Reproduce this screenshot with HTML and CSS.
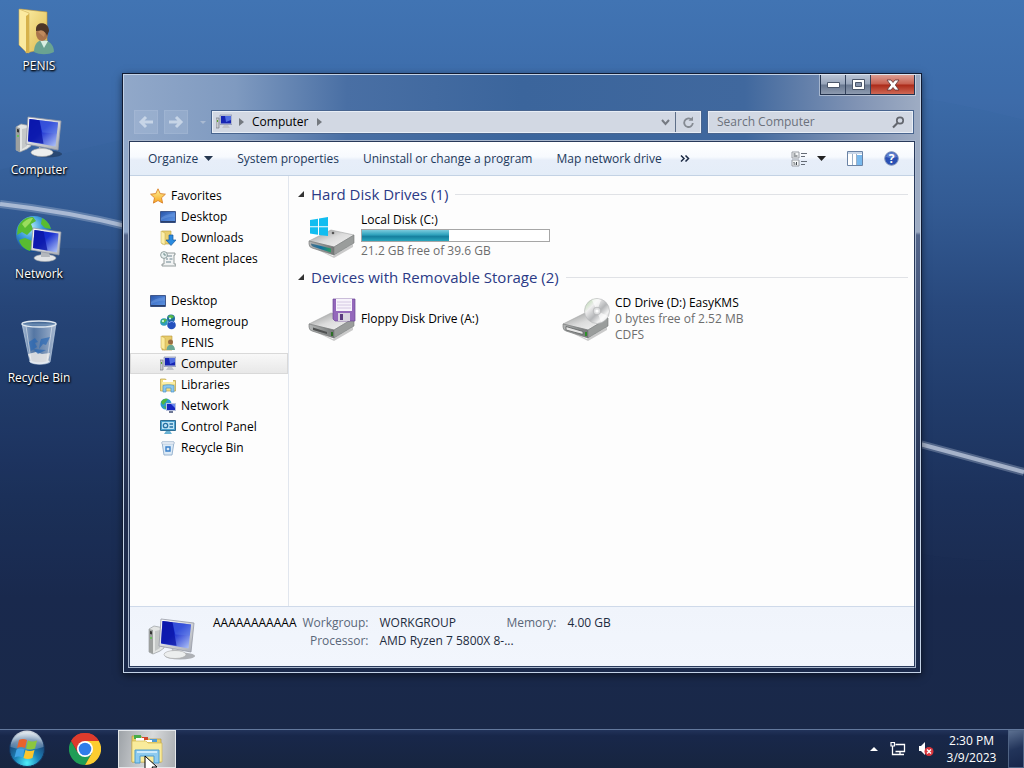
FILE: index.html
```html
<!DOCTYPE html>
<html lang="en">
<head>
    <meta charset="UTF-8">
    <meta name="viewport" content="width=device-width, initial-scale=1.0">
    <title>Computer</title>
    <link rel="stylesheet" href="styles.css">
</head>
<body>
    <!-- Shared icons -->
    <svg class="sprite" aria-hidden="true">
        <defs>
            <linearGradient id="gScreen" x1="0" y1="0" x2="1" y2="1"><stop offset="0" stop-color="#0a1cc0"/><stop offset=".45" stop-color="#1a30d0"/><stop offset="1" stop-color="#b9cdfa"/></linearGradient>
            <linearGradient id="gFrame" x1="0" y1="0" x2="1" y2="1"><stop offset="0" stop-color="#fff"/><stop offset="1" stop-color="#a9adb5"/></linearGradient>
            <linearGradient id="gFolder" x1="0" y1="0" x2="1" y2="1"><stop offset="0" stop-color="#fdf0a9"/><stop offset="1" stop-color="#dcb94e"/></linearGradient>
            <linearGradient id="gTop" x1="0" y1="0" x2="1" y2="1"><stop offset="0" stop-color="#8f9191"/><stop offset=".5" stop-color="#dcdcdc"/><stop offset="1" stop-color="#f6f6f6"/></linearGradient>
            <linearGradient id="gFront" x1="0" y1="0" x2="1" y2="0"><stop offset="0" stop-color="#b5b7b7"/><stop offset="1" stop-color="#737676"/></linearGradient>
            <linearGradient id="gTeal" x1="0" y1="0" x2="1" y2="0"><stop offset="0" stop-color="#4d7188"/><stop offset=".5" stop-color="#1370a0"/><stop offset="1" stop-color="#2d9b63"/></linearGradient>
            <radialGradient id="gGlobe" cx=".4" cy=".3" r=".75"><stop offset="0" stop-color="#b5ecfb"/><stop offset=".45" stop-color="#3b9bda"/><stop offset="1" stop-color="#0d3f87"/></radialGradient>
            <linearGradient id="gBin" x1="0" y1="0" x2="1" y2="0"><stop offset="0" stop-color="#dcecfa" stop-opacity=".7"/><stop offset=".35" stop-color="#86abd3" stop-opacity=".5"/><stop offset="1" stop-color="#dfeaf7" stop-opacity=".7"/></linearGradient>
            <linearGradient id="gDesk" x1="0" y1="0" x2="1" y2="1"><stop offset="0" stop-color="#2853a5"/><stop offset=".5" stop-color="#477bd0"/><stop offset="1" stop-color="#5f96e2"/></linearGradient>
            <linearGradient id="gDisc" x1="0" y1="0" x2="1" y2="1"><stop offset="0" stop-color="#a9d39a"/><stop offset=".3" stop-color="#eee"/><stop offset=".55" stop-color="#b4b6b8"/><stop offset=".75" stop-color="#f4f4f4"/><stop offset="1" stop-color="#9c9fa2"/></linearGradient>
            <radialGradient id="gOrb" cx=".5" cy=".9" r=".85"><stop offset="0" stop-color="#4ff0fb"/><stop offset=".4" stop-color="#1c84b9"/><stop offset=".8" stop-color="#1b4678"/><stop offset="1" stop-color="#7795b0"/></radialGradient>
            <linearGradient id="gOrbShine" x1="0" y1="0" x2="0" y2="1"><stop offset="0" stop-color="#fff" stop-opacity=".85"/><stop offset="1" stop-color="#cfe2f1" stop-opacity=".2"/></linearGradient>
            <linearGradient id="gStar" x1="0" y1="0" x2="0" y2="1"><stop offset="0" stop-color="#fff6a0"/><stop offset="1" stop-color="#f6a51c"/></linearGradient>
        </defs>

        <symbol id="computer" viewBox="0 0 48 48">
            <ellipse cx="32" cy="42" rx="15" ry="3.500" fill="#000" opacity=".28"/>
            <path d="M1 15l5-3 10 2v20l-4 3-7 3-4-2z" fill="#e3e5e4" stroke="#999da0" stroke-width=".7"/>
            <path d="M1 15l4 1v24l-4-2z" fill="#9da09f"/>
            <path d="M2 17l2 .5v3l-2-.5z" fill="#333"/><circle cx="3" cy="24" r="1" fill="#5bc748"/>
            <path d="M7 17l5-1v18l-5 3z" fill="#c5c8c8"/>
            <path d="M24 35l9 2 1 4H23z" fill="#b5b8bc"/>
            <ellipse cx="27" cy="40.500" rx="11" ry="4" fill="#eceeee" stroke="#aaa" stroke-width=".6"/>
            <path d="M13 5l33 4-3 29-32-6z" fill="url(#gFrame)" stroke="#9599a5" stroke-width=".8"/>
            <path d="M14.500 7l28.500 3.500-2.500 24-27.500-5z" fill="url(#gScreen)"/>
            <path d="M14.500 7l10 1.200 4 23.600-15.500-2.800z" fill="#0914a4" opacity=".75"/>
            <path d="M24.500 8.200L43 10.500l-1.200 11-14.500-1z" fill="#5c7de8" opacity=".45"/>
        </symbol>

        <symbol id="computer-sm" viewBox="0 0 16 16">
            <path d="M0 4h3v10H0z" fill="#c8cad0" stroke="#777c85" stroke-width=".7"/><path d="M1 6h1v2H1z" fill="#58a72f"/>
            <path d="M4 1h12v9.500H4z" fill="#c5ccdd" stroke="#7a84a5" stroke-width=".6"/>
            <path d="M5 2h10v7.500H5z" fill="#1625b4"/><path d="M9 2h6v4l-5 2z" fill="#4f6de2"/>
            <path d="M8 11h4l2 3H6z" fill="#c0c3ca"/>
        </symbol>

        <symbol id="user-folder" viewBox="0 0 48 48">
            <path d="M5 1l27 3v36l-21 5z" fill="url(#gFolder)" stroke="#c49a3a" stroke-width=".6"/>
            <path d="M4 1l10 4v40l-3-1-7-7z" fill="#fbeaa0" stroke="#cfaf55" stroke-width=".6"/>
            <path d="M11 8l3-2v39l-3-1z" fill="#d6b24c"/>
            <path d="M19 44c0-8 4-12 9-12s11 4 11 12c-6 3-14 3-20 0z" fill="#6aa391"/>
            <path d="M25 32l4 8 4-7z" fill="#d9efe2"/>
            <ellipse cx="27" cy="25" rx="6" ry="8" fill="#a9744c"/>
            <path d="M21 21c0-8 13-8 13 2l-2 5c-1-5-5-6-11-5z" fill="#4c3527"/>
            <path d="M23 24c2-3 6-2 7 1l-1 4z" fill="#c99467" opacity=".7"/>
        </symbol>

        <symbol id="user-folder-sm" viewBox="0 0 16 16">
            <path d="M2 1h10v14H2z" fill="#e7cc6c" stroke="#b99637" stroke-width=".6"/><path d="M1 1l4 2v12l-4-2z" fill="#fbeb9d" stroke="#c3a344" stroke-width=".5"/>
            <circle cx="10.500" cy="7" r="2.500" fill="#9a6c43"/><path d="M6.500 15c0-7 8.500-7 8.500 0z" fill="#69a794"/>
        </symbol>

        <symbol id="network" viewBox="0 0 48 48">
            <circle cx="19" cy="18" r="18" fill="url(#gGlobe)"/>
            <path d="M3 11C6 4 11 1 18 1l3 4-5 3 2 5-6 6-5-3-5 3zM10 22l7 3 2 5-4 5C9 33 5 29 4 24zM27 2c4 2 8 6 9 11l-6-1-4-4z" fill="#58bb31"/>
            <path d="M7 8c4-5 8-6 11-6l-3 5-5 5z" fill="#b7eb71" opacity=".7"/>
            <ellipse cx="30" cy="42" rx="11" ry="3.500" fill="#e2e4e6" stroke="#a3a6aa" stroke-width=".6"/>
            <path d="M26 36h8l1 5h-9z" fill="#b4b8bd"/>
            <path d="M18 12l28 4-2 23-28-5z" fill="url(#gFrame)" stroke="#8e93a0" stroke-width=".7"/>
            <path d="M19.500 14l24 3.500-1.500 19-24-4.500z" fill="url(#gScreen)"/><path d="M19.500 14l9 1.300 4 19.300-14.500-2.600z" fill="#0914a4" opacity=".75"/>
        </symbol>

        <symbol id="network-sm" viewBox="0 0 16 16">
            <circle cx="6" cy="6" r="5.500" fill="#2d9ad0"/><path d="M1 4c2-3 4-4 7-3L5 5 3 7zM3 8l4 1-1 2z" fill="#4eb540"/>
            <path d="M6 5h10v8H6z" fill="#b8c1de"/><path d="M7 6h8v6H7z" fill="#1626c0"/><path d="M11 6h4v4z" fill="#6888ef"/><path d="M9 13h4v2H9z" fill="#6e7895"/>
        </symbol>

        <symbol id="bin" viewBox="0 0 48 48">
            <path d="M7 4h34l-6 38c-3 3-17 3-20 0z" fill="url(#gBin)" stroke="#b9cce1" stroke-width=".7"/>
            <path d="M13 34l8-2 6 2 8-1-2 9c-3 2-14 2-17 0z" fill="#eceae8" opacity=".85"/>
            <path d="M14 22l6-4 3 4-3 1 2 4-6 4zM26 19l9-2-4 8-3-1-4 5 1-7zM18 29l13 1-8 4z" fill="#2566b4" opacity=".65"/>
            <path d="M11 6l5 35M37 6l-5 35" stroke="#fff" stroke-width="1" opacity=".45"/>
            <ellipse cx="24" cy="4" rx="17" ry="3" fill="#5b7fa9" fill-opacity=".65" stroke="#e0e8f0" stroke-width="1.400"/>
            <path d="M15 41c4 3 15 3 19 0" fill="none" stroke="#e3e9f0" stroke-width="2"/>
        </symbol>

        <symbol id="bin-sm" viewBox="0 0 16 16">
            <path d="M2 2h12l-2 13H4z" fill="#dceaf6" stroke="#8eacca" stroke-width=".9"/><path d="M2 2h12v2H2z" fill="#f8fbff" stroke="#a2b7cd" stroke-width=".6"/>
            <path d="M6 7h4v4H6z" fill="none" stroke="#397fc9" stroke-width="1.400"/>
        </symbol>

        <symbol id="star" viewBox="0 0 16 16"><path d="M8 .8l2.200 4.800 5.200.6-3.900 3.600 1.100 5.300L8 12.500l-4.600 2.600 1.100-5.300L.6 6.200l5.200-.6z" fill="url(#gStar)" stroke="#d9812a" stroke-width=".9"/></symbol>
        <symbol id="desk" viewBox="0 0 16 16"><path d="M.5 2.500h15v11H.5z" fill="url(#gDesk)" stroke="#40588c"/><path d="M1 12h14v1.500H1z" fill="#29406f"/><path d="M1 9c5-4 9-4 14-5v4C10 7 6 9 1 11z" fill="#79a5e5" opacity=".4"/></symbol>
        <symbol id="downloads" viewBox="0 0 16 16">
            <path d="M2 1h9v13H2z" fill="#e9d071" stroke="#b99f40" stroke-width=".6"/><path d="M1 1l4 2v12l-4-2z" fill="#fcefa9" stroke="#c7aa4d" stroke-width=".5"/>
            <path d="M9 5h4v5h3l-5 5.500L6 10h3z" fill="#2a8be0" stroke="#1b5a9c" stroke-width=".7"/>
        </symbol>
        <symbol id="recent" viewBox="0 0 16 16">
            <path d="M4 2h11v2h-1v9h2v2H2v-2h2z" fill="#f1f3f3" stroke="#7b8687" stroke-width=".8"/><path d="M7 5h5M6 8h2M9.500 8h3M6 11h5" stroke="#6c8590"/>
            <circle cx="4" cy="4" r="3.400" fill="#e7f0f0" stroke="#7b8c8b" stroke-width=".8"/><path d="M4 2v2h2" fill="none" stroke="#577" stroke-width=".8"/>
        </symbol>
        <symbol id="homegroup" viewBox="0 0 16 16">
            <circle cx="4" cy="8" r="3.800" fill="#2d9dbb"/><circle cx="11" cy="4.500" r="4" fill="#1f6f9f"/><circle cx="11.500" cy="11" r="4.300" fill="#2450bd"/>
            <path d="M8 3c2-3 5-2 6 0l-3 2zM1 8c1-3 4-4 6-2L4 9z" fill="#57b94a"/><path d="M9 9c2-2 4-2 5 0" stroke="#8eb4f5" fill="none"/><circle cx="10" cy="4.500" r="1" fill="#dff"/><circle cx="3" cy="7" r="1" fill="#dff"/>
        </symbol>
        <symbol id="libraries" viewBox="0 0 16 16">
            <path d="M.5 2h5l1 1.500h9V14H.5z" fill="#f3df83" stroke="#b89e45" stroke-width=".7"/><path d="M3 3h10v2H3z" fill="#fff"/><path d="M2 5h13v2H2z" fill="#fbeea6"/>
            <path d="M3 8.500c3-1 8-1 11 0V15h-3v-4H6v4H3z" fill="#8ac7ee" stroke="#4b92c5" stroke-width=".7"/>
        </symbol>
        <symbol id="panel" viewBox="0 0 16 16">
            <path d="M.5 1.500h15v10H.5z" fill="#4aa1cf" stroke="#2e6d93"/><path d="M2 3h12v7H2z" fill="#bfe4f5"/><circle cx="5.500" cy="6.500" r="2.200" fill="none" stroke="#2470a3" stroke-width="1.300"/>
            <path d="M9.500 5h3.500M9.500 8h3.500" stroke="#2470a3" stroke-width="1.300"/><path d="M6 12h4l2 3H4z" fill="#6ab1d2"/>
        </symbol>

        <symbol id="drive" viewBox="0 0 48 48">
            <path d="M4 35l21 9 20-12v3L26 46z" fill="#000" opacity=".2"/>
            <path d="M1 29l22-11 23 5-20 12z" fill="url(#gTop)" stroke="#a3a5a5" stroke-width=".6"/>
            <path d="M1 29l25 6v8L4 36q-3-1-3-4z" fill="url(#gFront)" stroke="#6e7070" stroke-width=".6"/>
            <path d="M26 35l20-12v8L26 43z" fill="#9a9d9c" stroke="#767878" stroke-width=".6"/>
        </symbol>

        <symbol id="folders" viewBox="0 0 32 32">
            <path d="M1 3h9l2 3h18v23H1z" fill="#e8cf6a" stroke="#b89836" stroke-width=".7"/>
            <path d="M3 2h7v4H3z" fill="#46ad4a"/><path d="M11 4h6v3h-6z" fill="#d3462b"/><path d="M19 6h7v3h-7z" fill="#4f9bd5"/><path d="M5 5h8v3H5zM14 7h7v2h-7z" fill="#fff"/>
            <path d="M1 8h14l2 2h14v19H1z" fill="#f9eb9b" stroke="#cfb453" stroke-width=".7"/>
            <path d="M4 17h24v13h-5v-7H9v7H4z" fill="#8ecbef" stroke="#4c9ccf"/><path d="M6 19h20" fill="none" stroke="#e1f5ff" stroke-width="1.500"/>
        </symbol>
    </svg>

    <div class="desktop">
        <!-- Wallpaper light streak -->
        <svg class="wallpaper" viewBox="0 0 1024 729" preserveAspectRatio="none" aria-hidden="true">
            <path d="M0 0h1024v120Q600 10 0 170z" fill="#5a92cf" opacity=".05"/>
            <path d="M0 250Q300 230 560 400T1024 560V729H0z" fill="#0c1a3c" opacity=".06"/>
            <path class="glow" d="M0 204Q70 212 130 227C400 300 700 385 920 444L1024 472"/>
            <path class="ray" d="M0 204Q70 212 130 227C400 300 700 385 920 444L1024 472"/>
        </svg>

        <nav class="shortcuts">
            <button class="shortcut"><svg><use href="#user-folder"/></svg><span>PENIS</span></button>
            <button class="shortcut"><svg><use href="#computer"/></svg><span>Computer</span></button>
            <button class="shortcut"><svg><use href="#network"/></svg><span>Network</span></button>
            <button class="shortcut"><svg><use href="#bin"/></svg><span>Recycle Bin</span></button>
        </nav>

        <section class="window">
            <header class="titlebar">
                <div class="controls">
                    <button class="control" aria-label="Minimize"><svg width="13" height="6" viewBox="0 0 13 6"><path d="M.5.500h12v5H.5z" fill="#fff" stroke="#4b566a"/></svg></button>
                    <button class="control" aria-label="Maximize"><svg width="13" height="11" viewBox="0 0 13 11"><path d="M.5.500h12v10H.5z" fill="#fff" stroke="#4b566a"/><path d="M3.500 3.500h6v4h-6z" fill="#8795ad" stroke="#4b566a"/></svg></button>
                    <button class="control close" aria-label="Close"><svg width="14" height="12" viewBox="0 0 14 12"><path d="M1 1h4l2 2.500L9 1h4L9.300 6l3.700 5H9L7 8.500 5 11H1l3.700-5z" fill="#fff" stroke="#5d3538" stroke-width=".8"/></svg></button>
                </div>
            </header>

            <div class="navbar">
                <button class="nav-btn" aria-label="Back"><svg width="16" height="14" viewBox="0 0 16 14"><path d="M8 2L3 7l5 5M3 7h12" fill="none" stroke="currentColor" stroke-width="3"/></svg></button>
                <button class="nav-btn" aria-label="Forward"><svg width="16" height="14" viewBox="0 0 16 14"><path d="M8 2l5 5-5 5M13 7H1" fill="none" stroke="currentColor" stroke-width="3"/></svg></button>
                <button class="nav-history" aria-label="Recent pages"><svg width="6" height="3" viewBox="0 0 6 3"><path d="M0 0h6L3 3z" fill="#a9bad2"/></svg></button>
                <div class="address">
                    <svg class="ico"><use href="#computer-sm"/></svg>
                    <svg class="crumb" viewBox="0 0 5 8"><path d="M0 0l5 4-5 4z" fill="#74797f"/></svg>
                    <a href="#">Computer</a>
                    <svg class="crumb" viewBox="0 0 5 8"><path d="M0 0l5 4-5 4z" fill="#74797f"/></svg>
                    <button class="drop" aria-label="Previous locations"><svg width="9" height="7" viewBox="0 0 9 7"><path d="M1 1l3.500 4L8 1" fill="none" stroke="#757a82" stroke-width="2"/></svg></button>
                    <button class="refresh" aria-label="Refresh"><svg width="13" height="13" viewBox="0 0 13 13"><path d="M9 3.200A4.300 4.300 0 1 0 10.800 7" fill="none" stroke="#858a92" stroke-width="1.800"/><path d="M6.500 4.800H11V.5z" fill="#858a92"/></svg></button>
                </div>
                <label class="search">
                    <input type="text" placeholder="Search Computer" aria-label="Search Computer">
                    <svg width="13" height="13" viewBox="0 0 13 13"><circle cx="8" cy="4.500" r="3.200" fill="none" stroke="#62666e" stroke-width="1.700"/><path d="M5.500 7L1 11.500" stroke="#62666e" stroke-width="2.200"/></svg>
                </label>
            </div>

            <div class="content">
                <div class="toolbar">
                    <button>Organize <svg width="9" height="5" viewBox="0 0 9 5"><path d="M0 0h9L4.500 5z" fill="#26374f"/></svg></button>
                    <button>System properties</button>
                    <button>Uninstall or change a program</button>
                    <button>Map network drive</button>
                    <button class="more" aria-label="More commands"><svg width="10" height="7" viewBox="0 0 10 7"><path d="M1 .5l3 3-3 3M5.500.5l3 3-3 3" fill="none" stroke="#1c2a44" stroke-width="1.500"/></svg></button>
                    <div class="view-tools">
                        <button class="view" aria-label="Change your view">
                            <svg width="17" height="16" viewBox="0 0 17 16"><path d="M1 1h7v6H1zM1 9h7v6H1z" fill="#f4f6f7" stroke="#999da4"/><path d="M2.500 5h4M2.500 3h2M2.500 13h2M5.500 11v3M3 11v1" stroke="#444b50"/><path d="M10 2.500h6M10 5.500h4M10 10.500h6M10 13.500h4" stroke="#646b75"/></svg>
                            <svg width="9" height="5" viewBox="0 0 9 5"><path d="M0 0h9L4.500 5z" fill="#222"/></svg>
                        </button>
                        <button aria-label="Show the preview pane"><svg width="16" height="15" viewBox="0 0 16 15"><path d="M.5.500h15v14H.5z" fill="#fff" stroke="#6a83a5"/><path d="M1 1h14v2H1z" fill="#c9d7e9"/><path d="M10 4h5v10h-5z" fill="#79b9ed"/><path d="M5.500 3v11M9.500 3v11" stroke="#9bb0c8"/></svg></button>
                        <button aria-label="Get help"><svg width="15" height="15" viewBox="0 0 15 15"><circle cx="7.500" cy="7.500" r="6.800" fill="#2a50b4" stroke="#8195bc"/><path d="M2 6a5.600 5.600 0 0 1 11 0q-5 2-11 0z" fill="#809de0" opacity=".6"/><text x="7.500" y="12" text-anchor="middle" class="help-mark">?</text></svg></button>
                    </div>
                </div>

                <div class="panes">
                    <nav class="sidebar">
                        <ul class="tree">
                            <li><a href="#" class="root"><svg class="ico"><use href="#star"/></svg>Favorites</a></li>
                            <li><a href="#"><svg class="ico"><use href="#desk"/></svg>Desktop</a></li>
                            <li><a href="#"><svg class="ico"><use href="#downloads"/></svg>Downloads</a></li>
                            <li><a href="#"><svg class="ico"><use href="#recent"/></svg>Recent places</a></li>
                        </ul>
                        <ul class="tree">
                            <li><a href="#" class="root"><svg class="ico"><use href="#desk"/></svg>Desktop</a></li>
                            <li><a href="#"><svg class="ico"><use href="#homegroup"/></svg>Homegroup</a></li>
                            <li><a href="#"><svg class="ico"><use href="#user-folder-sm"/></svg>PENIS</a></li>
                            <li><a href="#" class="selected"><svg class="ico"><use href="#computer-sm"/></svg>Computer</a></li>
                            <li><a href="#"><svg class="ico"><use href="#libraries"/></svg>Libraries</a></li>
                            <li><a href="#"><svg class="ico"><use href="#network-sm"/></svg>Network</a></li>
                            <li><a href="#"><svg class="ico"><use href="#panel"/></svg>Control Panel</a></li>
                            <li><a href="#"><svg class="ico"><use href="#bin-sm"/></svg>Recycle Bin</a></li>
                        </ul>
                    </nav>

                    <main class="files">
                        <h2><svg width="6" height="6" viewBox="0 0 6 6"><path d="M6 0v6H0z" fill="#333"/></svg>Hard Disk Drives (1)</h2>
                        <div class="group">
                            <div class="device">
                                <svg viewBox="0 0 48 48">
                                    <use href="#drive"/>
                                    <path d="M3 31.500l20 5v4L6 35q-3-1-3-3.500z" fill="url(#gTeal)"/>
                                    <circle cx="25" cy="21" r="1.300" fill="#555"/>
                                    <path d="M2 8l8-1.200v7.500H2zM11 6.600L20 5v9.300h-9zM2 15.300h8v7.500l-8-1.200zM11 15.300h9V24l-9-1.100z" fill="#11bdf0"/>
                                </svg>
                                <div class="info">
                                    <span class="name">Local Disk (C:)</span>
                                    <div class="usage"><div class="fill" style="width:46.5%"></div></div>
                                    <span class="meta">21.2 GB free of 39.6 GB</span>
                                </div>
                            </div>
                        </div>

                        <h2><svg width="6" height="6" viewBox="0 0 6 6"><path d="M6 0v6H0z" fill="#333"/></svg>Devices with Removable Storage (2)</h2>
                        <div class="group">
                            <div class="device">
                                <svg viewBox="0 0 48 48">
                                    <use href="#drive"/>
                                    <path d="M5 32.500l14 4.500v2L5 35z" fill="#4f5151"/><path d="M23 37h2v4h-2z" fill="#2d6f27"/>
                                    <path d="M25 4h22v22H27l-2-2z" fill="#9468bb" stroke="#6b4696" stroke-width=".7"/><path d="M28 4h16v12H28z" fill="#f7f3fb"/>
                                    <path d="M29 7h14M29 10h14M29 13h14" stroke="#d4c8e2"/><path d="M30 18h12v8H30z" fill="#d9d3e0"/><path d="M32 19h3v6h-3z" fill="#5a3a80"/>
                                </svg>
                                <div class="info"><span class="name">Floppy Disk Drive (A:)</span></div>
                            </div>
                            <div class="device">
                                <svg viewBox="0 0 48 48">
                                    <use href="#drive"/>
                                    <path d="M4 31.500l17 5v3L4 35z" fill="#e6e6e6" stroke="#5d5f5f" stroke-width=".8"/><path d="M23 37h2v4h-2z" fill="#2d8f27"/>
                                    <circle cx="35" cy="16" r="12.500" fill="url(#gDisc)" stroke="#b1b3b5" stroke-width=".6"/>
                                    <path d="M35 16l-5-11q5-2 9 0zM35 16l4 11q5-2 7-6z" fill="#fff" opacity=".65"/>
                                    <circle cx="35" cy="16" r="3.800" fill="#dfe0e1" stroke="#a4a6a8" stroke-width=".6"/><circle cx="35" cy="16" r="1.600" fill="#fff"/>
                                </svg>
                                <div class="info">
                                    <span class="name">CD Drive (D:) EasyKMS</span>
                                    <span class="meta">0 bytes free of 2.52 MB</span>
                                    <span class="meta">CDFS</span>
                                </div>
                            </div>
                        </div>
                    </main>
                </div>

                <footer class="details">
                    <svg class="details-icon"><use href="#computer"/></svg>
                    <span class="host">AAAAAAAAAAA</span>
                    <dl>
                        <dt>Workgroup:</dt><dd>WORKGROUP</dd>
                        <dt>Processor:</dt><dd>AMD Ryzen 7 5800X 8-...</dd>
                    </dl>
                    <dl>
                        <dt>Memory:</dt><dd>4.00 GB</dd>
                    </dl>
                </footer>
            </div>
        </section>
    </div>

    <footer class="taskbar">
        <button class="start" aria-label="Start">
            <svg width="38" height="38" viewBox="0 0 38 38">
                <circle cx="19" cy="19" r="17.500" fill="url(#gOrb)" stroke="#14335c"/>
                <path d="M2.500 17a16.500 16.500 0 0 1 33 0q-16 6-33 0z" fill="url(#gOrbShine)"/>
                <path d="M11 10q4-2 8 0l-2 8q-4-2-8 0z" fill="#e8622c"/><path d="M20 10.500q4 2 9 0l-2 8q-5 2-9 0z" fill="#8cc63e"/>
                <path d="M8.500 19.500q4-2 8 0l-2 8q-4-2-8 0z" fill="#41a4e6"/><path d="M17.500 20q4 2 9 0l-2 8q-5 2-9 0z" fill="#fcc62d"/>
            </svg>
        </button>
        <button class="chrome" aria-label="Google Chrome">
            <svg width="32" height="32" viewBox="0 0 32 32">
                <path d="M16 16L2.140 8A16 16 0 0 1 29.860 8z" fill="#de3b2c"/>
                <path d="M2.140 8A16 16 0 0 0 16 32l6.930-12L16 16 9.070 20z" fill="#1f9d55"/>
                <path d="M29.860 8A16 16 0 0 1 16 32l6.930-12L16 8z" fill="#fdcd30"/>
                <path d="M2.140 8L9.070 20 16 16V8h13.860A16 16 0 0 0 2.140 8z" fill="#de3b2c"/>
                <circle cx="16" cy="16" r="8" fill="#fff"/><circle cx="16" cy="16" r="6.300" fill="#2f7de9"/>
            </svg>
        </button>
        <button class="task active" aria-label="Windows Explorer">
            <svg width="32" height="32"><use href="#folders"/></svg>
            <svg class="cursor" width="14" height="20" viewBox="0 0 14 20"><path d="M1 1v16l4-3.500 3 6 3-1.500-3-6h5z" fill="#fff" stroke="#000"/></svg>
        </button>
        <div class="tray">
            <button aria-label="Show hidden icons"><svg width="8" height="4" viewBox="0 0 8 4"><path d="M4 0l4 4H0z" fill="#fff"/></svg></button>
            <button aria-label="Network"><svg width="16" height="16" viewBox="0 0 16 16"><path d="M5.500 3.500h9v7h-9M10 11v2M6 13.500h8M2.500 5v8.500H6" fill="none" stroke="#fff" stroke-width="1.300"/><path d="M1 1.500h3.500V5H1z" fill="#26375c" stroke="#fff" stroke-width="1.200"/></svg></button>
            <button aria-label="Volume muted"><svg width="16" height="16" viewBox="0 0 16 16"><path d="M1 5h2l4-4v13l-4-4H1z" fill="#fff"/><circle cx="11" cy="10.500" r="4.500" fill="#d9353c"/><path d="M9 8.500l4 4M13 8.500l-4 4" stroke="#fff" stroke-width="1.400"/></svg></button>
        </div>
        <button class="clock"><span>2:30 PM</span><span>3/9/2023</span></button>
        <button class="show-desktop" aria-label="Show desktop"></button>
    </footer>
</body>
</html>
```
FILE: styles.css
```css
/* Reset & base */
*{margin:0;padding:0;box-sizing:border-box}
body{height:100vh;display:flex;flex-direction:column;overflow:hidden;font:12px/16px "Open Sans","Noto Sans",sans-serif;color:#000;background:#17264a}
button{border:0;background:none;font:inherit;color:inherit;display:flex;align-items:center;justify-content:center}
a{color:inherit;text-decoration:none}
svg{flex:none;display:block}
.sprite{position:absolute;width:0;height:0}
.ico{width:16px;height:16px}

/* Desktop */
.desktop{position:relative;flex:1;background:linear-gradient(180deg,#4073b1 0,#3b6aa7 14%,#335b94 28%,#28487c 42%,#213c6b 55%,#1c315b 68%,#1a2a4e 82%,#1a2949 100%)}
.wallpaper{position:absolute;inset:0;width:100%;height:100%}
.glow,.ray{fill:none;stroke:#c9d3e6}
.glow{stroke-width:8;opacity:.3}
.ray{stroke-width:4;opacity:.7}
.shortcuts{position:relative;width:78px;padding-top:8px;display:flex;flex-direction:column;gap:37px}
.shortcut{flex-direction:column;gap:1px}
.shortcut svg{width:48px;height:48px}
.shortcut span{line-height:18px;color:#fff;white-space:nowrap;text-shadow:0 1px 2px #000,1px 1px 2px #000}

/* Window frame */
.window{position:absolute;top:74px;right:103px;bottom:56px;left:123px;padding:0 5px 5px;display:flex;flex-direction:column;border:1px solid #c3d2e6;box-shadow:0 0 0 1px #101b33,0 2px 8px rgba(0,0,0,.6);
background:linear-gradient(180deg,transparent 0,transparent 157px,#53658a 160px,#202d4d 440px,#1b2a4b 100%),linear-gradient(90deg,#91a8c9 0,#7f9ac0 14%,#496fa4 28%,#3b659c 50%,#40689e 78%,#8093b4 92%,#9eacc3 100%)}
.titlebar{display:flex;justify-content:flex-end;height:35px}
.controls{display:flex;height:20px;border:1px solid #24344f;border-top:0;box-shadow:0 0 0 1px rgba(255,255,255,.4)}
.control{width:25px;border-right:1px solid #35445d;background:linear-gradient(180deg,#b9c3d4 0,#98a5ba 48%,#68778f 52%,#8e9bb0 100%)}
.control.close{width:43px;border-right:0;background:linear-gradient(180deg,#dc9d92 0,#c75f4f 48%,#ab2a19 52%,#cf6854 100%)}

/* Navigation row */
.navbar{display:flex;align-items:center;height:31px;padding:0 2px 7px 5px}
.nav-btn{width:24px;height:24px;margin-right:6px;color:rgba(225,233,245,.65);background:rgba(200,215,235,.2);border:1px solid rgba(220,230,245,.12)}
.nav-history{width:18px;height:24px}
.address,.search{display:flex;align-items:center;height:22px;background:#d2d8e3;border:1px solid #e8eef6;box-shadow:0 0 0 1px #49658f}
.address{flex:1;margin:0 7px 0 0;padding-left:3px}
.address a{margin:0 8px}
.crumb{width:5px;height:8px;margin-left:7px}
.address a+.crumb{margin-left:0}
.drop{margin-left:auto;width:20px;height:20px}
.refresh{width:25px;height:20px;border-left:1px solid #5e6f88}
.search{width:205px;padding:0 7px 0 8px}
.search input{flex:1;min-width:0;border:0;background:none;font:inherit;outline:none}
.search input::placeholder{color:#6b717c;opacity:1}

/* Content box */
.content{flex:1;min-height:0;display:flex;flex-direction:column;background:#fdfdfd;border:1px solid #28395a;outline:1px solid #a8b6cc}
.toolbar{display:flex;align-items:center;gap:24px;height:34px;padding:0 15px 0 18px;color:#1e395b;background:linear-gradient(180deg,#fff 0,#f7fafe 45%,#e7eef9 55%,#e4edf8 100%);border-bottom:1px solid #c3d2e4}
.toolbar button{gap:6px;white-space:nowrap}
.toolbar .more{margin-left:-6px}
.view-tools{display:flex;align-items:center;gap:21px;margin-left:auto}
.toolbar .view{gap:9px}
.help-mark{font:bold 12px "Open Sans",sans-serif;fill:#fff}
.panes{flex:1;min-height:0;display:flex}

/* Sidebar */
.sidebar{width:159px;padding:9px 0;border-right:1px solid #e1e6ee}
.tree{list-style:none;margin-bottom:21px}
.tree a{display:flex;align-items:center;gap:5px;height:21px;padding-left:29px;border:1px solid transparent}
.tree a.root{padding-left:19px}
.tree a.selected{background:linear-gradient(180deg,#f8f8f8,#e8e8e8);border-color:#d9d9d9}

/* Device list */
.files{flex:1;min-width:0;padding:8px 6px 0 9px}
.files h2{display:flex;align-items:center;gap:7px;font-size:15px;line-height:20px;font-weight:400;color:#2b3a86}
.files h2::after{content:"";flex:1;height:1px;background:#e0e2e6}
.group{display:flex;height:63px}
.device{display:flex;align-items:center;gap:5px;width:254px;padding-left:10px}
.device>svg{width:48px;height:48px}
.info{display:flex;flex-direction:column}
.meta{color:#6d6d6d}
.usage{width:189px;height:13px;margin:1px 0;background:#fff;border:1px solid #a6a6a6}
.fill{height:100%;background:linear-gradient(180deg,#7acbdd 0,#35a6c0 40%,#16809f 60%,#2ba7bd 100%)}

/* Details pane */
.details{display:flex;align-items:flex-start;height:60px;padding:7px 18px;line-height:18px;color:#1e2c40;background:linear-gradient(180deg,#f0f4fb,#f2f6fd);border-top:1px solid #cfdaea}
.details-icon{width:48px;height:48px;margin-right:17px}
.host{color:#000}
.details dl{display:grid;grid-template-columns:auto 127px;column-gap:11px;margin-left:6px}
.details dl+dl{margin-left:0}
.details dt{text-align:right;color:#5a6779}
.details dd{white-space:nowrap}

/* Taskbar */
.taskbar{position:relative;display:flex;align-items:center;height:39px;padding-left:8px;color:#fff;background:linear-gradient(180deg,#22335a 0,#18274a 15%,#17253f 100%);border-top:1px solid #62789c}
.chrome{margin:0 17px 0 23px}
.task{position:relative;width:58px;height:38px}
.task.active{border:1px solid #e4e7ea;background:linear-gradient(100deg,#9ea3a8,#d8dadb 55%,#a9adb1)}
.cursor{position:absolute;left:25px;top:24px}
.tray{display:flex;align-items:center;gap:12px;margin-left:auto}
.clock{flex-direction:column;width:73px;margin-left:1px;line-height:17px}
.show-desktop{width:16px;height:38px;border:1px solid #4f6384;background:linear-gradient(160deg,#5b6f90,#22345a 50%,#17264a)}
```
